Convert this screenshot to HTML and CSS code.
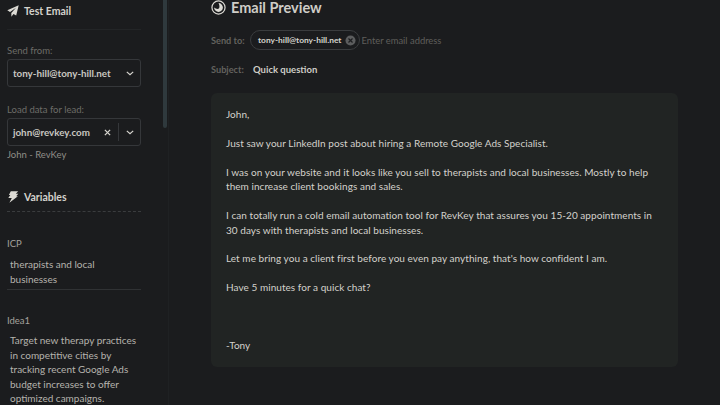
FILE: index.html
```html
<!DOCTYPE html>
<html lang="en">
<head>
<meta charset="utf-8">
<title>Email Preview</title>
<link rel="stylesheet" href="styles.css">
</head>
<body>
<div class="app">
  <aside class="sidebar">
    <div class="side-content">
      <h2 class="side-title test-title">
        <svg class="ic" viewBox="0 0 12 12"><path d="M11.700 .3 .3 5.200l2.700 1.700L9 2.800 4.300 7.900l.1 3.800 2.100-2.600 2.700 1.300z" fill="#dcdad4"/></svg>
        Test Email
      </h2>
      <div class="rule"></div>
      <label class="lbl from-lbl">Send from:</label>
      <div class="select first">
        <span class="sel-text">tony-hill@tony-hill.net</span>
        <svg class="chev" viewBox="0 0 10 6"><path d="M1 1l4 3.500L9 1" fill="none" stroke="#d8d6d0" stroke-width="1.500"/></svg>
      </div>
      <label class="lbl lead-lbl">Load data for lead:</label>
      <div class="select second">
        <span class="sel-text">john@revkey.com</span>
        <svg class="x" viewBox="0 0 8 8"><path d="M1 1l6 6M7 1 1 7" stroke="#d8d6d0" stroke-width="1.500"/></svg>
        <span class="sep"></span>
        <svg class="chev" viewBox="0 0 10 6"><path d="M1 1l4 3.500L9 1" fill="none" stroke="#d8d6d0" stroke-width="1.500"/></svg>
      </div>
      <div class="lead-name">John - RevKey</div>
      <h2 class="side-title vars-title">
        <svg class="ic" viewBox="0 0 12 12"><path d="M3.800 .3h7.400L8.800 2.800h2.500L9.200 5.200h1.700L2.400 11.800 4.800 7H1.300l2-2.900H1.900z" fill="#dcdad4"/></svg>
        Variables
      </h2>
      <div class="rule dashed"></div>
      <div class="var-name icp-name">ICP</div>
      <div class="var-value icp-value">therapists and local businesses</div>
      <div class="var-name idea-name">Idea1</div>
      <div class="var-value idea-value">Target new therapy practices in competitive cities by tracking recent Google Ads budget increases to offer optimized campaigns.</div>
    </div>
    <div class="thumb"></div>
  </aside>
  <main class="main">
    <h1 class="title">
      <svg class="eye" viewBox="0 0 16 16"><circle cx="8" cy="8" r="7" fill="none" stroke="#dcdad4" stroke-width="1.300"/><path d="M8 3.300A4.700 4.700 0 1 1 3.300 8c1.200 1 2.200 1.500 3.700 1.500S9 8.500 9 7 8.500 4.500 8 3.300z" fill="#dcdad4"/></svg>
      Email Preview
    </h1>
    <div class="row to-row">
      <span class="field">Send to:</span>
      <span class="chip">tony-hill@tony-hill.net
        <svg class="chip-x" viewBox="0 0 12 12"><circle cx="6" cy="6" r="5.500" fill="#5c5d5e"/><path d="M3.800 3.800l4.400 4.400M8.200 3.800 3.800 8.200" stroke="#1d1e20" stroke-width="1.300"/></svg>
      </span>
      <span class="placeholder">Enter email address</span>
    </div>
    <div class="row subj-row">
      <span class="field">Subject:</span>
      <span class="subject">Quick question</span>
    </div>
    <article class="panel">
      <p>John,</p>
      <p>Just saw your LinkedIn post about hiring a Remote Google Ads Specialist.</p>
      <p>I was on your website and it looks like you sell to therapists and local businesses. Mostly to help them increase client bookings and sales.</p>
      <p>I can totally run a cold email automation tool for RevKey that assures you 15-20 appointments in 30 days with therapists and local businesses.</p>
      <p>Let me bring you a client first before you even pay anything, that's how confident I am.</p>
      <p>Have 5 minutes for a quick chat?</p>
      <p class="sign">-Tony</p>
    </article>
  </main>
</div>
</body>
</html>
```
FILE: styles.css
```css
* { box-sizing: border-box; }
html, body { margin: 0; height: 100%; overflow: hidden; background: #1b1c1e; }
body { font-family: Lato, "Open Sans", sans-serif; color: #dcdad4; }
.app { display: flex; width: 720px; height: 405px; overflow: hidden; }
.sidebar { position: relative; width: 169px; flex: none; overflow: hidden; border-right: 1px solid #1f2123; }
.side-content { width: 134px; margin-left: 7px; padding-top: 4px; }
.side-title { display: flex; align-items: center; gap: 5px; margin: 0; font-size: 10.500px; line-height: 14px; font-weight: 700; color: #d4d2cc; }
.ic { width: 12px; height: 12px; flex: none; }
.rule { height: 1px; margin-top: 11px; background: #232527; }
.rule.dashed { margin-top: 7px; background: none; border-top: 1px dashed #3a3c3e; }
.lbl { display: block; font-size: 9.500px; line-height: 12px; color: #6d6c68; }
.from-lbl { margin-top: 15px; }
.lead-lbl { margin-top: 17px; }
.select { display: flex; align-items: center; height: 28px; padding: 0 5px; border: 1px solid #35373a; border-radius: 3px; }
.select.first { margin-top: 2px; }
.select.second { margin-top: 2px; }
.sel-text { flex: 1; font-size: 9.800px; font-weight: 700; color: #c9c7c1; white-space: nowrap; }
.chev { width: 8px; height: 5px; margin-left: 4px; margin-right: 1px; flex: none; }
.x { width: 7px; height: 7px; flex: none; }
.sep { width: 1px; height: 18px; margin: 0 3px 0 7px; background: #35373a; }
.lead-name { margin-top: 3px; font-size: 9.500px; line-height: 12px; color: #8f8d88; }
.vars-title { margin-top: 29px; }
.var-name { font-size: 9.500px; line-height: 12px; color: #a3a19c; }
.icp-name { margin-top: 26px; }
.idea-name { margin-top: 25px; }
.var-value { padding-left: 3px; margin-top: 7px; font-size: 10px; line-height: 14.500px; color: #b5b3ad; }
.idea-value { margin-top: 6px; }
.icp-value { padding-bottom: 3px; border-bottom: 1px solid #303234; padding-right: 20px; }
.thumb { position: absolute; left: 163px; top: 0; width: 4px; height: 128px; border-radius: 0 0 2px 2px; background: #2f393d; }
.main { flex: 1; padding: 0 42px; }
.title { display: flex; align-items: center; gap: 5px; margin: 0; font-size: 14.500px; line-height: 15px; font-weight: 700; color: #cfcdc7; }
.eye { width: 15px; height: 15px; flex: none; }
.row { display: flex; align-items: center; font-size: 9.200px; }
.to-row { height: 20px; margin-top: 15px; }
.subj-row { margin-top: 12px; height: 14px; }
.field { width: 39px; flex: none; color: #63625e; font-weight: 700; }
.chip { display: flex; align-items: center; height: 20px; padding: 0 3px 0 7px; gap: 4px; border: 1px solid #3a3c3e; border-radius: 10px; font-weight: 700; font-size: 8.400px; color: #d6d4ce; white-space: nowrap; }
.chip-x { width: 11px; height: 11px; flex: none; }
.placeholder { margin-left: 1px; color: #5f5e5b; font-size: 9.400px; }
.subject { margin-left: 3px; font-size: 9.500px; font-weight: 700; color: #cfcdc7; }
.panel { width: 467px; height: 274px; margin-top: 17px; padding: 14px 20px 15px 15px; border-radius: 6px; background: #212423; font-size: 10px; letter-spacing: .05px; line-height: 14.600px; color: #d4d2cc; }
.panel p { margin: 0 0 14.200px; }
.panel .sign { margin-top: 43.500px; }
```
